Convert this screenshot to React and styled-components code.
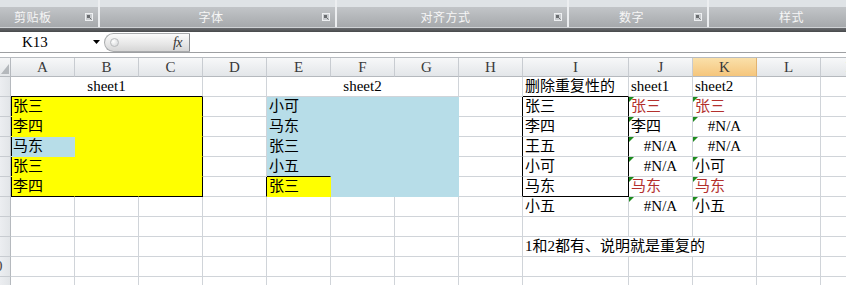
import React from 'react';
import styled, { createGlobalStyle, css } from 'styled-components';

const GRID = '#d0d4d9';
const YELLOW = '#ffff00';
const BLUE = '#b7dde8';
const RED = '#b3302d';
const CELL_FONT = '"Liberation Serif", "Noto Sans CJK SC", serif';
const CJK_FONT = '"Noto Sans CJK SC", "Liberation Sans", sans-serif';

const GlobalStyle = createGlobalStyle`
  html, body { margin: 0; padding: 0; background: #fff; }
  body { width: 846px; height: 285px; overflow: hidden; }
`;

const Page = styled.div`
  width: 846px;
  height: 285px;
  overflow: hidden;
  display: flex;
  flex-direction: column;
`;

/* ---------- Ribbon ---------- */
const Ribbon = styled.div`
  display: flex;
  height: 28px;
  flex-shrink: 0;
  box-sizing: border-box;
  border-bottom: 1px solid #cfd2d5;
  background: #dfe3e6;
`;

const RibbonGroup = styled.div`
  width: ${p => p.$w}px;
  flex-shrink: 0;
  box-sizing: border-box;
  display: flex;
  flex-direction: column;
  border-right: 2px solid #eceef0;
  box-shadow: 1px 0 0 #a3a6a9;
`;

const GroupTop = styled.div`
  height: 7px;
  background: #dfe3e6;
`;

const GroupLabelBar = styled.div`
  height: 20px;
  display: flex;
  align-items: center;
  background: linear-gradient(#c2c5c8, #a6a9ac);
`;

const GroupLabel = styled.span`
  flex: 1;
  text-align: ${p => (p.$left ? 'left' : 'center')};
  padding-left: ${p => (p.$left ? 14 : 0)}px;
  font: 12px/20px ${CJK_FONT};
  color: #f6f6f6;
  letter-spacing: 0.5px;
`;

const LauncherBox = styled.span`
  width: 8px;
  height: 8px;
  margin: 0 5px 0 0;
  display: flex;
`;

const Launcher = () => (
  <LauncherBox>
    <svg width="8" height="8" viewBox="0 0 8 8">
      <rect x="0.5" y="0.5" width="7" height="7" fill="#c9cccf" stroke="#eef0f2" />
      <rect x="2" y="2" width="3" height="3" fill="#6a6d70" />
      <path d="M4.5 4.5 L6.5 6.5" stroke="#6a6d70" strokeWidth="1" />
    </svg>
  </LauncherBox>
);

const DarkBand = styled.div`
  height: 4px;
  flex-shrink: 0;
  background: linear-gradient(#6a6c6f, #47494b);
`;

/* ---------- Formula bar ---------- */
const FormulaBar = styled.div`
  display: flex;
  align-items: center;
  height: 21px;
  flex-shrink: 0;
  box-sizing: border-box;
  border-bottom: 1px solid #9d9fa2;
  background: #fff;
`;

const NameBox = styled.div`
  width: 104px;
  height: 100%;
  flex-shrink: 0;
  display: flex;
  align-items: center;
`;

const NameText = styled.span`
  padding-left: 22px;
  font: 15px/20px "Liberation Serif", serif;
  color: #000;
`;

const DropArrow = styled.span`
  margin-left: auto;
  margin-right: 4px;
  display: flex;
`;

const FxPill = styled.div`
  width: 86px;
  height: 19px;
  box-sizing: border-box;
  flex-shrink: 0;
  display: flex;
  align-items: center;
  border: 1px solid #a9abad;
  border-right-color: #8a8c8f;
  border-radius: 10px 0 0 10px;
  background: linear-gradient(#fbfbfb, #e6e6e6 60%, #d6d6d6);
`;

const Knob = styled.span`
  width: 9px;
  height: 9px;
  margin-left: 5px;
  border-radius: 50%;
  box-sizing: border-box;
  border: 1px solid #b9bbbd;
  background: radial-gradient(circle at 35% 35%, #ffffff, #cfd1d3);
`;

const Fx = styled.span`
  margin-left: auto;
  margin-right: 7px;
  font: italic 14px/17px "Liberation Serif", serif;
  color: #333;
  letter-spacing: -0.5px;
`;

const FormulaInput = styled.div`
  flex: 1;
  height: 100%;
`;

const Spacer = styled.div`
  height: 4px;
  flex-shrink: 0;
`;

/* ---------- Sheet ---------- */
const Sheet = styled.div`
  display: grid;
  grid-template-columns: 11px repeat(8, 64px) 106px repeat(4, 64px);
  grid-auto-rows: 20px;
  grid-template-rows: 19px;
  border-top: 1px solid #b7bbc0;
  width: max-content;
`;

const Corner = styled.div`
  box-sizing: border-box;
  background: linear-gradient(#f5f6f7, #e3e6e9);
  border-right: 1px solid #b5b9be;
  border-bottom: 1px solid #b5b9be;
  display: flex;
  align-items: flex-end;
  justify-content: flex-end;
  padding: 0 1px 2px 0;
`;

const ColHead = styled.div`
  box-sizing: border-box;
  background: ${p =>
    p.$active
      ? 'linear-gradient(#fae0aa, #f5c57c)'
      : 'linear-gradient(#f7f8f9, #e3e6e9)'};
  border-right: 1px solid ${p => (p.$active ? '#e2b36f' : '#c8ccd1')};
  border-bottom: 1px solid #b5b9be;
  font: 15px/18px "Liberation Serif", serif;
  color: #3a3a3a;
  text-align: center;
`;

const RowHead = styled.div`
  box-sizing: border-box;
  background: linear-gradient(to right, #eceef1, #e2e5e8);
  border-right: 1px solid #b5b9be;
  border-bottom: 1px solid #c8ccd1;
  display: flex;
  justify-content: flex-end;
  overflow: hidden;
`;

const RowNum = styled.span`
  flex-shrink: 0;
  width: 30px;
  text-align: center;
  font: 15px/19px "Liberation Serif", serif;
  color: #444;
`;

const Cell = styled.div`
  box-sizing: border-box;
  position: relative;
  grid-column: span ${p => p.$span || 1};
  background: ${p => p.$bg || 'transparent'};
  border-right: 1px solid ${p => (p.$r ? '#000' : p.$bg || GRID)};
  border-bottom: 1px solid ${p => (p.$b ? '#000' : p.$bg || GRID)};
  box-shadow: ${p => (p.$l ? 'inset 1px 0 0 #000' : 'none')};
  color: ${p => (p.$red ? RED : '#000')};
  font: 15px/19px ${CELL_FONT};
  text-align: ${p => p.$align || 'left'};
  padding: 0 2px;
  white-space: nowrap;
  overflow: hidden;
  ${p =>
    p.$tri &&
    css`
      &::before {
        content: '';
        position: absolute;
        top: 0;
        left: 0;
        width: 0;
        height: 0;
        border-top: 5px solid #1e8a1e;
        border-right: 5px solid transparent;
      }
    `}
`;

/* ---------- Data ---------- */
const COLS = ['A', 'B', 'C', 'D', 'E', 'F', 'G', 'H', 'I', 'J', 'K', 'L', 'M'];

const names1 = ['张三', '李四', '马东', '张三', '李四'];
const names2 = ['小可', '马东', '张三', '小五', '张三'];
const colI = ['张三', '李四', '王五', '小可', '马东', '小五'];
const colJ = [['张三', true], ['李四'], ['#N/A'], ['#N/A'], ['马东', true], ['#N/A']];
const colK = [['张三', true], ['#N/A'], ['#N/A'], ['小可'], ['马东', true], ['小五']];

const lookupCell = ([text, red]) => ({
  text,
  red,
  tri: true,
  align: text === '#N/A' ? 'center' : 'left',
});

function buildRow(r) {
  if (r === 1) {
    return [
      { span: 3, text: 'sheet1', align: 'center', b: true },
      {},
      { span: 3, text: 'sheet2', align: 'center' },
      {},
      { text: '删除重复性的', b: true },
      { text: 'sheet1' },
      { text: 'sheet2' },
      {},
      {},
    ];
  }
  if (r >= 2 && r <= 6) {
    const i = r - 2;
    const last = r === 6;
    return [
      { text: names1[i], bg: i === 2 ? BLUE : YELLOW, l: true, b: last },
      { bg: YELLOW, b: last },
      { bg: YELLOW, r: true, b: last },
      { r: last },
      { text: names2[i], bg: last ? YELLOW : BLUE, b: r === 5 },
      { bg: BLUE },
      { bg: BLUE },
      { r: true },
      { text: colI[i], r: true, b: last },
      lookupCell(colJ[i]),
      lookupCell(colK[i]),
      {},
      {},
    ];
  }
  if (r === 7) {
    return [
      {}, {}, {}, {}, {}, {}, {}, {},
      { text: colI[5] },
      lookupCell(colJ[5]),
      lookupCell(colK[5]),
      {},
      {},
    ];
  }
  if (r === 9) {
    return [
      {}, {}, {}, {}, {}, {}, {}, {},
      { span: 3, text: '1和2都有、说明就是重复的' },
      {},
      {},
    ];
  }
  return COLS.map(() => ({}));
}

const ROWS = Array.from({ length: 11 }, (_, k) => k + 1);

const groups = [
  { w: 100, label: '剪贴板', left: true, launch: true },
  { w: 237, label: '字体', launch: true },
  { w: 232, label: '对齐方式', launch: true },
  { w: 140, label: '数字', launch: true },
  { w: 180, label: '样式', launch: true },
];

export default function App() {
  return (
    <>
      <GlobalStyle />
      <Page>
        <Ribbon>
          {groups.map(g => (
            <RibbonGroup key={g.label} $w={g.w}>
              <GroupTop />
              <GroupLabelBar>
                <GroupLabel $left={g.left}>{g.label}</GroupLabel>
                {g.launch && <Launcher />}
              </GroupLabelBar>
            </RibbonGroup>
          ))}
        </Ribbon>
        <DarkBand />
        <FormulaBar>
          <NameBox>
            <NameText>K13</NameText>
            <DropArrow>
              <svg width="7" height="4" viewBox="0 0 7 4">
                <path d="M0 0 H7 L3.5 4 Z" fill="#000" />
              </svg>
            </DropArrow>
          </NameBox>
          <FxPill>
            <Knob />
            <Fx>fx</Fx>
          </FxPill>
          <FormulaInput />
        </FormulaBar>
        <Spacer />
        <Sheet>
          <Corner>
            <svg width="8" height="10" viewBox="0 0 8 10">
              <path d="M8 0 V10 H0 Z" fill="#b4b8bc" />
            </svg>
          </Corner>
          {COLS.map(c => (
            <ColHead key={c} $active={c === 'K'}>
              {c}
            </ColHead>
          ))}
          {ROWS.map(r => (
            <React.Fragment key={r}>
              <RowHead>
                <RowNum>{r}</RowNum>
              </RowHead>
              {buildRow(r).map((cell, ci) => (
                <Cell
                  key={ci}
                  $span={cell.span}
                  $bg={cell.bg}
                  $r={cell.r}
                  $b={cell.b}
                  $l={cell.l}
                  $red={cell.red}
                  $tri={cell.tri}
                  $align={cell.align}
                >
                  {cell.text}
                </Cell>
              ))}
            </React.Fragment>
          ))}
        </Sheet>
      </Page>
    </>
  );
}
